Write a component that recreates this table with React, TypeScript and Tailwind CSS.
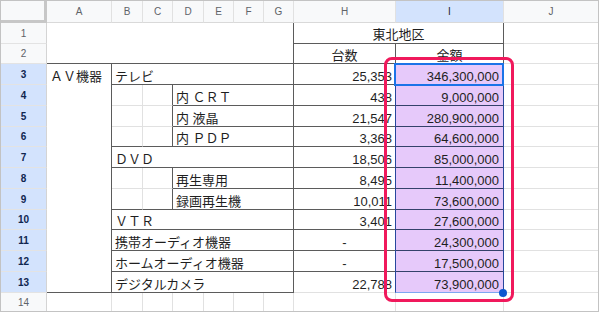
import React from "react";

const DR = "border-r border-r-[#5b5b5b]";
const LR = "border-r border-r-[#e1e1e1]";
const DB = "border-b border-b-[#5b5b5b]";
const LB = "border-b border-b-[#e1e1e1]";
const TXT = "flex items-end leading-[14px] text-[13px] text-[#1f1f1f] whitespace-pre overflow-hidden";

const GR = [
  "",
  "row-start-1",
  "row-start-2",
  "row-start-3",
  "row-start-4",
  "row-start-5",
  "row-start-6",
  "row-start-7",
  "row-start-8",
  "row-start-9",
  "row-start-10",
  "row-start-11",
  "row-start-12",
  "row-start-13",
  "row-start-14",
  "row-start-15",
];
const GC = [
  "",
  "col-start-1",
  "col-start-2",
  "col-start-3",
  "col-start-4",
  "col-start-5",
  "col-start-6",
  "col-start-7",
  "col-start-8",
  "col-start-9",
  "col-start-10",
  "col-start-11",
];

type Row = { r: number; kind: "bg" | "dg"; label: string; last?: boolean; h: string; i: string };

const rows: Row[] = [
  { r: 3, kind: "bg", label: "テレビ", h: "25,353", i: "346,300,000" },
  { r: 4, kind: "dg", label: "内 ＣＲＴ", h: "438", i: "9,000,000" },
  { r: 5, kind: "dg", label: "内 液晶", h: "21,547", i: "280,900,000" },
  { r: 6, kind: "dg", label: "内 ＰＤＰ", last: true, h: "3,368", i: "64,600,000" },
  { r: 7, kind: "bg", label: "ＤＶＤ", h: "18,506", i: "85,000,000" },
  { r: 8, kind: "dg", label: "再生専用", h: "8,495", i: "11,400,000" },
  { r: 9, kind: "dg", label: "録画再生機", last: true, h: "10,011", i: "73,600,000" },
  { r: 10, kind: "bg", label: "ＶＴＲ", h: "3,401", i: "27,600,000" },
  { r: 11, kind: "bg", label: "携帯オーディオ機器", h: "-", i: "24,300,000" },
  { r: 12, kind: "bg", label: "ホームオーディオ機器", h: "-", i: "17,500,000" },
  { r: 13, kind: "bg", label: "デジタルカメラ", h: "22,788", i: "73,900,000" },
];

const letters = ["A", "B", "C", "D", "E", "F", "G", "H", "I", "J"];

export default function App() {
  return (
    <div className="w-[599px] h-[312px] border border-[#c3c3c3] bg-white overflow-hidden relative grid grid-cols-[46px_65px_31px_30px_31px_30px_30px_30px_102px_108px_94px] grid-rows-[22px_21px_20px_21px_21px_21px_20px_21px_21px_21px_20px_21px_21px_21px_18px] font-['Liberation_Sans','Noto_Sans_CJK_JP',sans-serif]">
      {/* corner */}
      <div className="col-start-1 row-start-1 bg-[#f8f9fa] border-r-[3px] border-b-[3px] border-[#c7c7c7]" />

      {/* column headers */}
      {letters.map((l, idx) => (
        <div
          key={l}
          className={`${GC[idx + 2]} row-start-1 flex items-center justify-center text-[10px] border-b border-b-[#d9d9d9] ${
            l === "I" ? "bg-[#d3e3fd] text-[#1f1f1f]" : "bg-[#f8f9fa] text-[#5f6368]"
          } ${l === "J" ? "" : "border-r border-r-[#e1e1e1]"}`}
        >
          {l}
        </div>
      ))}

      {/* row headers */}
      {Array.from({ length: 14 }, (_, k) => k + 1).map((n) => {
        const sel = n >= 3 && n <= 13;
        return (
          <div
            key={n}
            className={`col-start-1 ${GR[n + 1]} flex items-center justify-center text-[10px] border-r border-r-[#d4d4d4] ${
              n === 14 ? "" : "border-b border-b-[#e3e3e3]"
            } ${sel ? "bg-[#d3e3fd] font-bold text-[#0f2650]" : "bg-[#f8f9fa] text-[#5f6368]"}`}
          >
            {n}
          </div>
        );
      })}

      {/* rows 1-2 */}
      <div className={`col-start-2 col-span-7 row-start-2 row-span-2 ${DR} ${DB}`} />
      <div className={`col-start-9 col-span-2 row-start-2 ${DR} ${DB} ${TXT} justify-center pb-[1px]`}>東北地区</div>
      <div className={`col-start-11 row-start-2 ${LB}`} />
      <div className={`col-start-9 row-start-3 ${DR} ${DB} ${TXT} justify-center`}>台数</div>
      <div className={`col-start-10 row-start-3 ${DR} ${DB} ${TXT} justify-center`}>金額</div>
      <div className={`col-start-11 row-start-3 ${LB}`} />

      {/* A3:A13 */}
      <div className={`col-start-2 row-start-4 row-span-11 ${DR} ${DB} flex items-start pt-[6px] pl-[3px] leading-[14px] text-[13px] text-[#1f1f1f]`}>
        ＡＶ機器
      </div>

      {rows.map((row) => {
        const g = row.r + 1;
        const gr = GR[g];
        const isLast13 = row.r === 13;
        return (
          <React.Fragment key={row.r}>
            {row.kind === "bg" ? (
              <div className={`col-start-3 col-span-6 ${gr} ${DR} ${DB} ${TXT} pl-[3px]`}>{row.label}</div>
            ) : (
              <>
                <div className={`col-start-3 ${gr} ${LR} ${row.last ? DB : LB}`} />
                <div className={`col-start-4 ${gr} ${DR} ${row.last ? DB : LB}`} />
                <div className={`col-start-5 col-span-4 ${gr} ${DR} ${DB} ${TXT} pl-[3px]`}>{row.label}</div>
              </>
            )}
            <div
              className={`col-start-9 ${gr} ${DR} ${isLast13 ? LB : DB} ${TXT} ${
                row.h === "-" ? "justify-center" : "justify-end pr-[3px]"
              }`}
            >
              {row.h}
            </div>
            <div
              className={`col-start-10 ${gr} ${DR} ${
                isLast13 ? LB : "border-b border-b-[#34416a]"
              } bg-[#e6c9fa] ${TXT} justify-end pr-[4px]`}
            >
              {row.i}
            </div>
            <div className={`col-start-11 ${gr} ${LB}`} />
          </React.Fragment>
        );
      })}

      {/* row 14 */}
      <div className={`col-start-2 row-start-15 ${LR}`} />
      <div className={`col-start-3 row-start-15 ${LR}`} />
      <div className={`col-start-4 row-start-15 ${LR}`} />
      <div className={`col-start-5 row-start-15 ${LR}`} />
      <div className={`col-start-6 row-start-15 ${LR}`} />
      <div className={`col-start-7 row-start-15 ${LR}`} />
      <div className={`col-start-8 row-start-15 ${LR}`} />
      <div className={`col-start-9 row-start-15 ${LR}`} />
      <div className={`col-start-10 row-start-15 ${LR}`} />
      <div className="col-start-11 row-start-15" />

      {/* selection range */}
      <div className="absolute left-[394px] top-[62px] w-[109px] h-[230px] border-x border-b border-x-[#27479c] border-b-[#7ea6f2] pointer-events-none" />
      {/* active cell */}
      <div className="absolute left-[393px] top-[62px] w-[110px] h-[23px] border-2 border-[#1a73e8] pointer-events-none" />
      {/* fill handle */}
      <div className="absolute left-[498px] top-[288px] w-[8px] h-[8px] rounded-full bg-[#0b57d0]" />
      {/* annotation */}
      <div className="absolute left-[383px] top-[56px] w-[130px] h-[245px] border-[3px] border-[#f0195c] rounded-[8px] pointer-events-none" />
    </div>
  );
}
